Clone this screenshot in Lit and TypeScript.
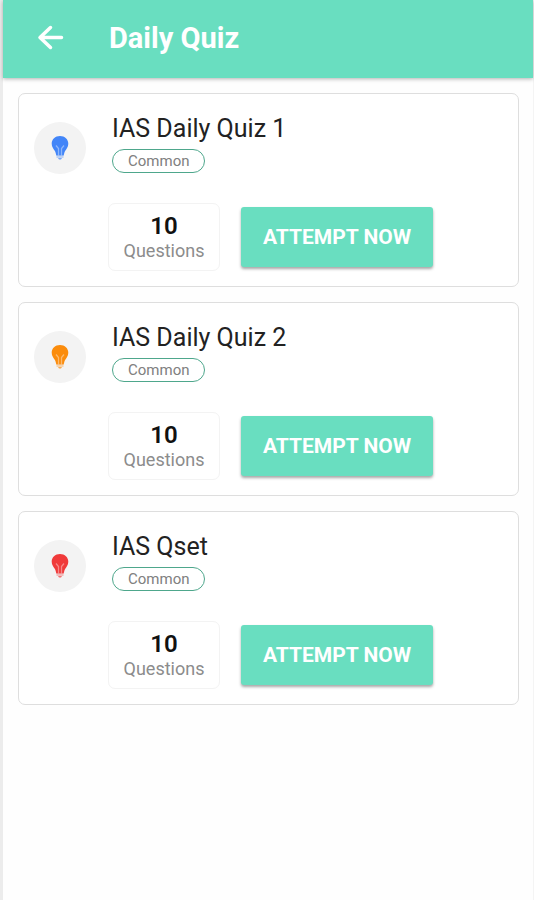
import { LitElement, html, css } from "lit";
import { customElement, property } from "lit/decorators.js";

interface Quiz {
  title: string;
  tag: string;
  questions: number;
  tone: "blue" | "orange" | "red";
}

const QUIZZES: Quiz[] = [
  { title: "IAS Daily Quiz 1", tag: "Common", questions: 10, tone: "blue" },
  { title: "IAS Daily Quiz 2", tag: "Common", questions: 10, tone: "orange" },
  { title: "IAS Qset", tag: "Common", questions: 10, tone: "red" },
];

@customElement("quiz-card")
export class QuizCard extends LitElement {
  @property({ attribute: false }) quiz!: Quiz;

  static styles = css`
    :host {
      display: block;
    }
    .card {
      display: grid;
      grid-template-columns: 52px 1fr;
      column-gap: 22px;
      padding: 21px 15px 15px;
      border: 1px solid #dedede;
      border-radius: 7px;
      background: #fff;
    }
    .avatar {
      display: flex;
      align-items: center;
      justify-content: center;
      width: 52px;
      height: 52px;
      margin-top: 7px;
      border-radius: 50%;
      background: #f3f3f3;
    }
    .blue {
      color: #4285f8;
    }
    .orange {
      color: #fb8c0c;
    }
    .red {
      color: #f03a3a;
    }
    .heading {
      padding-left: 4px;
    }
    .title {
      margin: 0 0 6px;
      font-size: 25px;
      line-height: 28px;
      font-weight: 400;
      color: #222;
    }
    .tag {
      display: inline-block;
      box-sizing: border-box;
      height: 24px;
      padding: 0 15px;
      border: 1px solid #4ea78c;
      border-radius: 12px;
      font-size: 15px;
      line-height: 22px;
      color: #808080;
      vertical-align: top;
    }
    .actions {
      display: flex;
      align-items: center;
      gap: 21px;
      margin-top: 30px;
    }
    .stat {
      box-sizing: border-box;
      width: 112px;
      padding: 8px 0;
      border: 1px solid #f3f3f3;
      border-radius: 7px;
      text-align: center;
    }
    .count {
      display: block;
      font-size: 24px;
      line-height: 28px;
      font-weight: 600;
      color: #111;
    }
    .label {
      display: block;
      font-size: 18px;
      line-height: 22px;
      font-weight: 400;
      color: #8c8c8c;
    }
    .attempt {
      height: 60px;
      width: 192px;
      padding: 0;
      border: 0;
      border-radius: 3px;
      background: #69dec0;
      box-shadow: 0 2px 3px rgba(0, 0, 0, 0.35);
      font-family: inherit;
      font-size: 21px;
      line-height: 24px;
      font-weight: 700;
      color: #fff;
      white-space: nowrap;
      cursor: pointer;
    }
  `;

  render() {
    const { title, tag, questions, tone } = this.quiz;
    return html`
      <article class="card">
        <div class="avatar ${tone}">
          <svg width="18" height="26" viewBox="0 0 18 26" aria-hidden="true">
            <path
              fill="currentColor"
              d="M9 1C4.200 1 .7 4.300.7 8.700c0 3.300 1.900 5 3.200 7.300.8 1.400 1 2.800 1.400 4.500h7.400c.4-1.700.6-3.100 1.400-4.500 1.300-2.300 3.200-4 3.200-7.300C17.300 4.300 13.800 1 9 1z"
            />
            <path
              fill="none"
              stroke="#fff"
              stroke-opacity=".4"
              stroke-width="1.300"
              d="M5 10.500l2.500 3v7M13 10.500l-2.500 3v7"
            />
            <path fill="currentColor" fill-opacity=".3" d="M5.500 20.500h7v2.500h-7z" />
            <path fill="currentColor" fill-opacity=".7" d="M7 23h4l-1 1.500H8z" />
          </svg>
        </div>
        <div>
          <div class="heading">
            <h2 class="title">${title}</h2>
            <span class="tag">${tag}</span>
          </div>
          <div class="actions">
            <div class="stat">
              <span class="count">${questions}</span>
              <span class="label">Questions</span>
            </div>
            <button class="attempt" type="button">ATTEMPT NOW</button>
          </div>
        </div>
      </article>
    `;
  }
}

@customElement("app-root")
export class AppRoot extends LitElement {
  static styles = css`
    :host {
      display: block;
      box-sizing: border-box;
      min-height: 100vh;
      border-left: 3px solid #ececec;
      border-right: 1px solid #f4f4f4;
      background: #fefefe;
      font-family: Roboto, "Liberation Sans", sans-serif;
    }
    .bar {
      display: flex;
      align-items: center;
      gap: 42px;
      height: 78px;
      padding: 0 31px 2px;
      box-sizing: border-box;
      background: #69dec0;
      box-shadow: 0 1px 4px rgba(0, 0, 0, 0.3);
      color: #fff;
    }
    .back {
      display: flex;
      padding: 0;
      border: 0;
      background: none;
      color: inherit;
      cursor: pointer;
    }
    .heading {
      margin: 0;
      font-size: 29px;
      line-height: 36px;
      font-weight: 700;
    }
    .list {
      display: grid;
      gap: 15px;
      padding: 15px 14px 15px 15px;
    }
  `;

  render() {
    return html`
      <header class="bar">
        <button class="back" type="button" aria-label="Back">
          <svg width="33" height="32" viewBox="0 0 33 32" aria-hidden="true">
            <path
              fill="none"
              stroke="currentColor"
              stroke-width="3.500"
              stroke-linecap="round"
              stroke-linejoin="round"
              d="M27.500 15.500H6.500M16.500 5.500L6 15.500 16.500 25.500"
            />
          </svg>
        </button>
        <h1 class="heading">Daily Quiz</h1>
      </header>
      <main class="list">
        ${QUIZZES.map((quiz) => html`<quiz-card .quiz=${quiz}></quiz-card>`)}
      </main>
    `;
  }
}
